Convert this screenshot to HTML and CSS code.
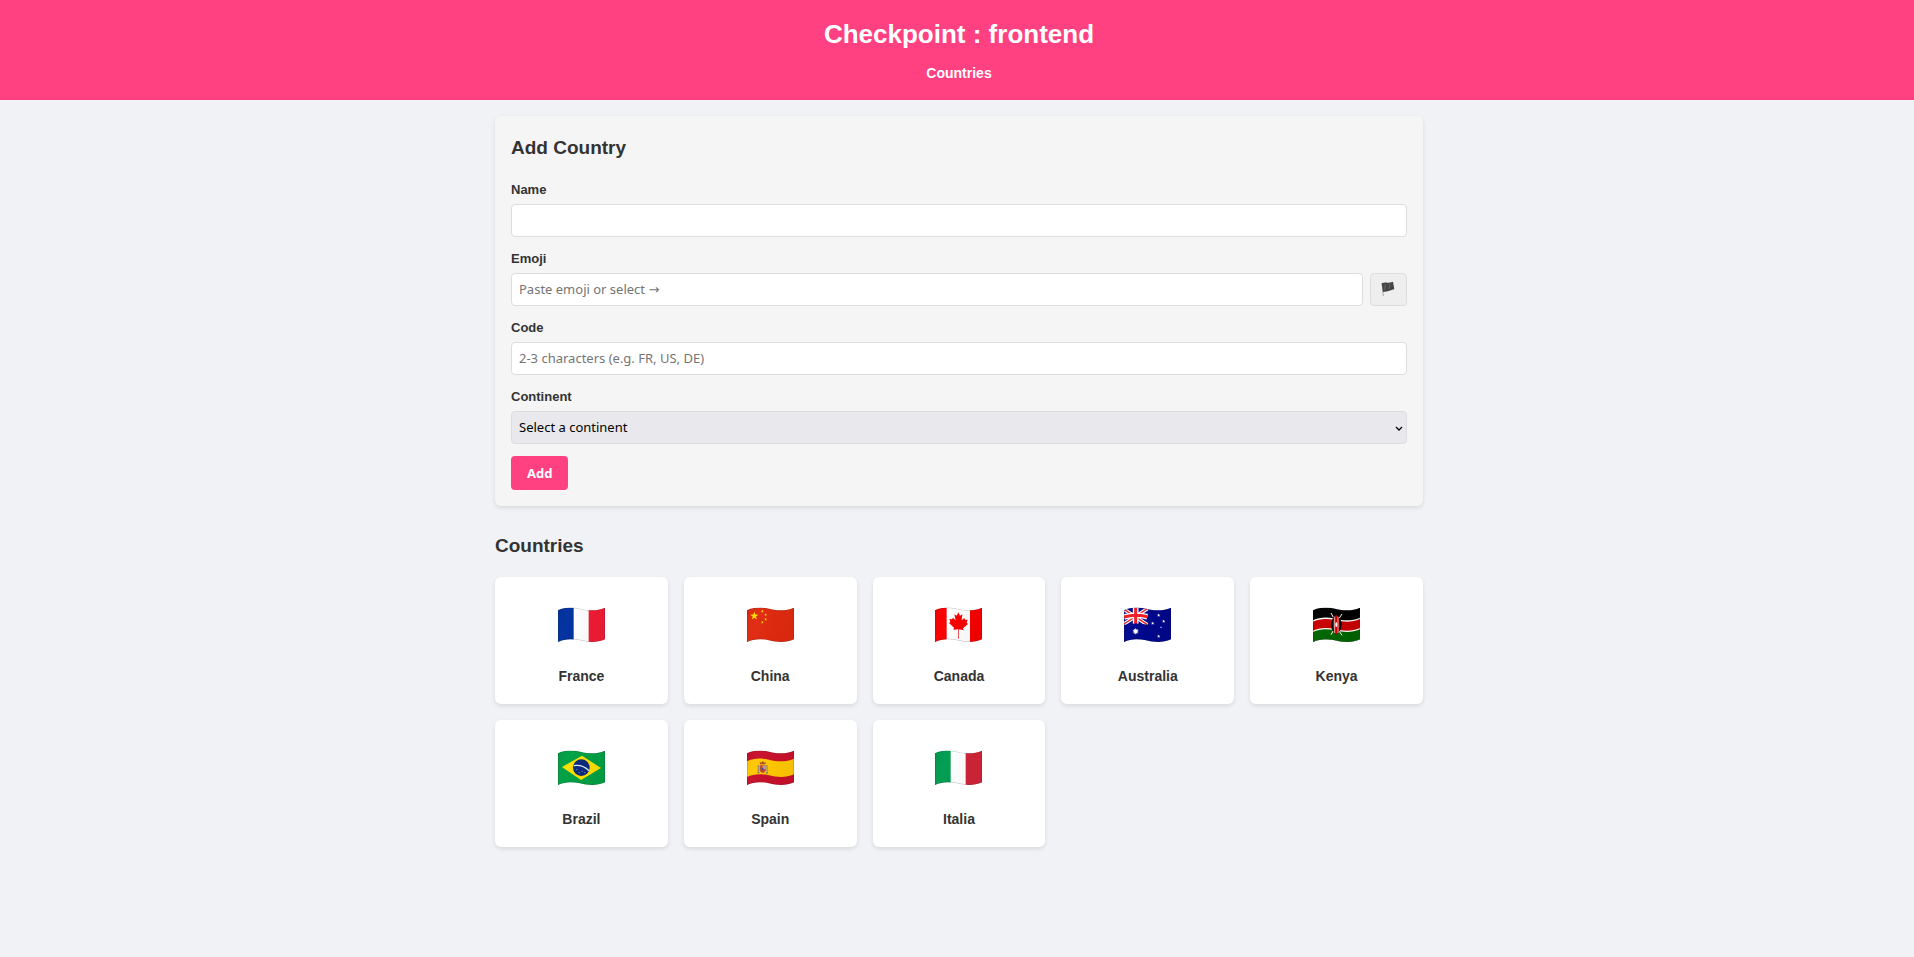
FILE: index.html
```html
<!DOCTYPE html>
<html lang="en">
<head>
<meta charset="utf-8">
<meta name="viewport" content="width=device-width, initial-scale=1">
<title>Checkpoint : frontend</title>
<link rel="stylesheet" href="styles.css">
</head>
<body>
<svg class="defs" width="0" height="0" aria-hidden="true">
  <defs>
    <clipPath id="wave"><path d="M0 8C20 -2 42 -2 66 3C92 9 116 11 141 0V95C116 106 92 104 66 98C42 93 20 93 0 103Z"/></clipPath>
    <linearGradient id="shade" x1="0" x2="1" y1="0" y2="0.25">
      <stop offset="0" stop-color="#000" stop-opacity=".04"/>
      <stop offset=".3" stop-color="#fff" stop-opacity=".02"/>
      <stop offset=".65" stop-color="#000" stop-opacity=".02"/>
      <stop offset="1" stop-color="#000" stop-opacity=".04"/>
    </linearGradient>
    <g id="finish">
      <path d="M0 8C20 -2 42 -2 66 3C92 9 116 11 141 0V95C116 106 92 104 66 98C42 93 20 93 0 103Z" fill="url(#shade)" stroke="#222" stroke-opacity=".3" stroke-width="3"/>
    </g>
    <path id="star" d="M0 -10L2.4 -3.2L9.5 -3.1L3.8 1.2L5.9 8.1L0 4L-5.9 8.1L-3.8 1.2L-9.5 -3.1L-2.4 -3.2Z"/>
  </defs>
</svg>
<header class="header">
  <h1 class="header-title">Checkpoint : frontend</h1>
  <nav><a class="header-link" href="#countries">Countries</a></nav>
</header>
<main class="main">
  <form class="form">
    <h2 class="title form-title">Add Country</h2>
    <div class="field">
      <label class="label" for="name">Name</label>
      <input class="control" id="name" type="text">
    </div>
    <div class="field">
      <label class="label" for="emoji">Emoji</label>
      <div class="emoji-row">
        <input class="control" id="emoji" type="text" placeholder="Paste emoji or select →">
        <button class="picker" type="button" aria-label="Choose a flag">
          <svg width="14" height="16" viewBox="0 0 42 48" aria-hidden="true">
            <path d="M3 7L7 45" stroke="#aaa" stroke-width="3"/>
            <path d="M2 7C12 2 18 8 36 2L40 25C28 27 22 33 6 33Z" fill="#444"/>
            <path d="M13 10L11 27M27 7L24 25" stroke="#777" stroke-width="2"/>
          </svg>
        </button>
      </div>
    </div>
    <div class="field">
      <label class="label" for="code">Code</label>
      <input class="control" id="code" type="text" placeholder="2-3 characters (e.g. FR, US, DE)">
    </div>
    <div class="field">
      <label class="label" for="continent">Continent</label>
      <div class="select-wrap">
        <select class="control select" id="continent"><option>Select a continent</option></select>
        <svg class="chevron" width="8" height="6" viewBox="0 0 8 6" aria-hidden="true"><path d="M1 1L4 4L7 1" fill="none" stroke="#000" stroke-width="1.300"/></svg>
      </div>
    </div>
    <button class="submit" type="submit">Add</button>
  </form>
  <section class="countries" id="countries">
    <h2 class="title">Countries</h2>
    <div class="grid">
      <article class="card">
        <svg class="flag" viewBox="0 0 141 104" aria-hidden="true"><g clip-path="url(#wave)"><path fill="#fff" d="M0 0H141V104H0Z"/><path fill="#0030a0" d="M0 0H47V104H0Z"/><path fill="#f01c34" d="M92 0H141V104H92Z"/><use href="#finish"/></g></svg>
        <h3 class="name">France</h3>
      </article>
      <article class="card">
        <svg class="flag" viewBox="0 0 141 104" aria-hidden="true"><g clip-path="url(#wave)"><path fill="#e02a10" d="M0 0H141V104H0Z"/><g fill="#ffde00"><use href="#star" transform="translate(22 25) scale(1.300)"/><use href="#star" transform="translate(46 11) scale(.45)"/><use href="#star" transform="translate(56 21) scale(.45)"/><use href="#star" transform="translate(56 35) scale(.45)"/><use href="#star" transform="translate(46 44) scale(.45)"/></g><use href="#finish"/></g></svg>
        <h3 class="name">China</h3>
      </article>
      <article class="card">
        <svg class="flag" viewBox="0 0 141 104" aria-hidden="true"><g clip-path="url(#wave)"><path fill="#fff" d="M0 0H141V104H0Z"/><path fill="#f80000" d="M0 0H35V104H0ZM105 0H141V104H105ZM70 14L75 24L82 20L80 38L88 31L90 36L98 36L95 45L99 49L84 62L86 68L71 65L71 93H69L69 65L55 66L57 60L42 46L46 43L43 34L51 35L54 30L62 38L58 20L65 24Z"/><use href="#finish"/></g></svg>
        <h3 class="name">Canada</h3>
      </article>
      <article class="card">
        <svg class="flag" viewBox="0 0 141 104" aria-hidden="true"><g clip-path="url(#wave)"><path fill="#00078c" d="M0 0H141V104H0Z"/><path d="M0 5L70 51M0 49L70 3" stroke="#fff" stroke-width="11"/><path d="M0 5L70 51M0 49L70 3" stroke="#f01c24" stroke-width="4"/><path d="M35 0V49M0 28Q30 18 70 27" fill="none" stroke="#fff" stroke-width="17"/><path d="M35 0V49M0 28Q30 18 70 27" fill="none" stroke="#f01c24" stroke-width="9"/><path d="M0 52Q30 43 70 51V60H0Z" fill="#00078c"/><g fill="#fff"><use href="#star" transform="translate(35 71)"/><use href="#star" transform="translate(35 71) rotate(36)"/><use href="#star" transform="translate(104 23) scale(.55)"/><use href="#star" transform="translate(86 47) scale(.55)"/><use href="#star" transform="translate(119 41) scale(.55)"/><use href="#star" transform="translate(111 59) scale(.3)"/><use href="#star" transform="translate(104 86) scale(.55)"/></g><use href="#finish"/></g></svg>
        <h3 class="name">Australia</h3>
      </article>
      <article class="card">
        <svg class="flag" viewBox="0 0 141 104" aria-hidden="true"><g clip-path="url(#wave)"><path fill="#000" d="M0 0H141V104H0Z"/><path fill="#fff" d="M0 38C20 28 42 28 66 33C92 39 116 41 141 30V104H0Z"/><path fill="#c80000" d="M0 42C20 32 42 32 66 37C92 43 116 45 141 34V61C116 72 92 70 66 64C42 59 20 59 0 69Z"/><path fill="#006400" d="M0 73C20 63 42 63 66 68C92 74 116 76 141 65V104H0Z"/><path d="M54 16L61 29M87 19L79 31M61 69L54 81M79 71L87 83" stroke="#fff" stroke-width="3"/><ellipse cx="70" cy="51" rx="16" ry="24" fill="#000"/><ellipse cx="70" cy="51" rx="10" ry="29" fill="#c80000"/><path d="M65 27V76M75 27V76" stroke="#fff" stroke-width="2"/><ellipse cx="70" cy="51" rx="3" ry="7" fill="#fff"/><use href="#finish"/></g></svg>
        <h3 class="name">Kenya</h3>
      </article>
      <article class="card">
        <svg class="flag" viewBox="0 0 141 104" aria-hidden="true"><g clip-path="url(#wave)"><path fill="#00a044" d="M0 0H141V104H0Z"/><path fill="#ffe000" d="M12 49L72 15L129 52L69 88Z"/><circle cx="70" cy="51" r="25" fill="#0b2a7c"/><path d="M47 45Q73 40 93 60" fill="none" stroke="#dfe9f4" stroke-width="4"/><path d="M55 57H58M62 66H65M71 62H74M79 66H82" stroke="#8fa5d0" stroke-width="3"/><use href="#finish"/></g></svg>
        <h3 class="name">Brazil</h3>
      </article>
      <article class="card">
        <svg class="flag" viewBox="0 0 141 104" aria-hidden="true"><g clip-path="url(#wave)"><path fill="#c8102c" d="M0 0H141V104H0Z"/><path fill="#ffc800" d="M0 32C20 22 42 22 66 27C92 33 116 35 141 24V71C116 82 92 80 66 74C42 69 20 69 0 79Z"/><path d="M34 43V64M60 43V66" stroke="#a58a70" stroke-width="4"/><path d="M38 44H56V59Q54 67 47 67Q40 67 38 59Z" fill="#c4482c"/><path d="M47 45H56V56H47Z" fill="#b8a0a0"/><path d="M39 41L38 34L43 36L47 31L51 36L56 34L55 41Z" fill="#ad4b22"/><circle cx="47" cy="55" r="3" fill="#284ca0"/><path d="M31 66H38M56 67H63" stroke="#5a7890" stroke-width="3"/><use href="#finish"/></g></svg>
        <h3 class="name">Spain</h3>
      </article>
      <article class="card">
        <svg class="flag" viewBox="0 0 141 104" aria-hidden="true"><g clip-path="url(#wave)"><path fill="#fff" d="M0 0H141V104H0Z"/><path fill="#009c50" d="M0 0H47V104H0Z"/><path fill="#d02438" d="M92 0H141V104H92Z"/><use href="#finish"/></g></svg>
        <h3 class="name">Italia</h3>
      </article>
    </div>
  </section>
</main>
</body>
</html>
```
FILE: styles.css
```css
* { box-sizing: border-box; margin: 0; }

body {
  background: #f0f2f5;
  color: #333;
  font-family: "Liberation Sans", Arial, sans-serif;
}

.defs { position: absolute; }

.header {
  display: flex;
  flex-direction: column;
  align-items: center;
  gap: 9px;
  padding: 16px 16px 15px 20px;
  background: #ff4081;
  color: #fff;
}

.header-title { font-size: 26px; line-height: 36px; }

.header-link {
  display: block;
  color: inherit;
  font-size: 14px;
  font-weight: bold;
  line-height: 24px;
  text-decoration: none;
}

.main {
  display: flex;
  flex-direction: column;
  gap: 24px;
  max-width: 964px;
  margin: 0 auto;
  padding: 16px 16px 16px 20px;
}

.title { font-size: 19px; line-height: 31px; }

.form {
  display: flex;
  flex-direction: column;
  align-items: stretch;
  gap: 12px;
  padding: 16px;
  border-radius: 6px;
  background: #f5f5f5;
  box-shadow: 0 2px 4px rgba(0, 0, 0, 0.1);
}

.form-title { margin-bottom: 5px; }

.field { display: flex; flex-direction: column; gap: 4px; }

.label { font-size: 13px; font-weight: bold; line-height: 20px; }

.control {
  width: 100%;
  height: 33px;
  padding: 0 7px 1px;
  border: 1px solid #ddd;
  border-radius: 4px;
  background: #fff;
  color: #000;
  font: 13px "Noto Sans", "DejaVu Sans", sans-serif;
}

.control::placeholder { color: #757575; }

.emoji-row { display: flex; gap: 7px; }

.picker {
  display: flex;
  flex: 0 0 37px;
  align-items: center;
  justify-content: center;
  padding: 0 2px 1px 0;
  border: 1px solid #ddd;
  border-radius: 4px;
  background: #eee;
}

.select-wrap { position: relative; display: flex; }

.select { appearance: none; background: #e9e9ed; }

.chevron {
  position: absolute;
  top: 15px;
  right: 4px;
  pointer-events: none;
}

.submit {
  align-self: flex-start;
  height: 34px;
  padding: 0 16px;
  border: 0;
  border-radius: 4px;
  background: #ff4081;
  color: #fff;
  font: bold 13px "Noto Sans", sans-serif;
}

.countries { display: flex; flex-direction: column; gap: 16px; }

.grid {
  display: grid;
  grid-template-columns: repeat(auto-fill, minmax(150px, 1fr));
  gap: 16px;
}

.card {
  display: flex;
  flex-direction: column;
  align-items: center;
  gap: 8px;
  padding: 16px;
  border-radius: 6px;
  background: #fff;
  box-shadow: 0 2px 4px rgba(0, 0, 0, 0.1);
}

.flag { width: 47px; height: 64px; }

.name { font-size: 14px; line-height: 23px; }
```
